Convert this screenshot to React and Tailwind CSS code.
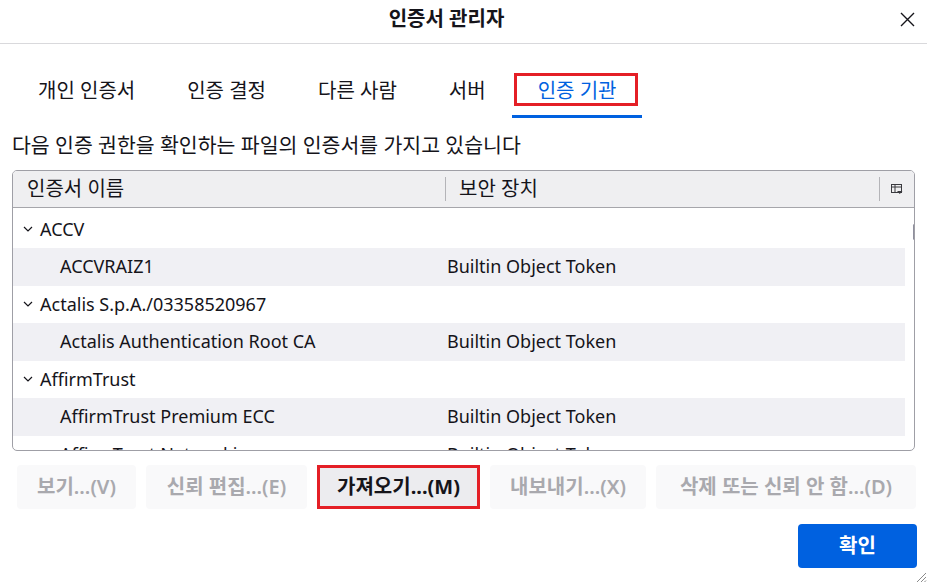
import React from "react";

const F = { fontFamily: '"Noto Sans", "Noto Sans CJK KR", sans-serif' };

function Chevron() {
  return (
    <svg width="10" height="6" viewBox="0 0 10 6" className="shrink-0">
      <path d="M1 1 L5 5 L9 1" fill="none" stroke="#15141a" strokeWidth="1.2" />
    </svg>
  );
}

const rows = [
  { type: "g", name: "ACCV" },
  { type: "c", name: "ACCVRAIZ1", dev: "Builtin Object Token" },
  { type: "g", name: "Actalis S.p.A./03358520967" },
  { type: "c", name: "Actalis Authentication Root CA", dev: "Builtin Object Token" },
  { type: "g", name: "AffirmTrust" },
  { type: "c", name: "AffirmTrust Premium ECC", dev: "Builtin Object Token" },
  { type: "c2", name: "AffirmTrust Networking", dev: "Builtin Object Token" },
];

export default function App() {
  return (
    <div
      className="w-[927px] h-[582px] bg-white text-[#15141a] flex flex-col relative overflow-hidden"
      style={F}
    >
      {/* title bar */}
      <div className="h-[44px] shrink-0 border-b border-[#d9d9dc] flex items-center justify-center pr-[34px] relative">
        <span className="text-[20px] leading-[26px] font-bold -mt-[5px]">인증서 관리자</span>
        <svg
          className="absolute right-[12px] top-[12px]"
          width="15"
          height="15"
          viewBox="0 0 15 15"
        >
          <path d="M1 1 L14 14 M14 1 L1 14" stroke="#15141a" strokeWidth="1.4" />
        </svg>
      </div>

      {/* tabs */}
      <div className="flex pl-[12px] mt-[26px] text-[20px]">
        {["개인 인증서", "인증 결정", "다른 사람", "서버"].map((t) => (
          <div key={t} className="h-[48px] px-[26px] flex items-center pb-[4px] border-b-[3px] border-transparent">
            {t}
          </div>
        ))}
        <div className="relative h-[48px] px-[26px] flex items-center pb-[4px] border-b-[3px] border-[#0061e0] text-[#0061e0]">
          인증 기관
          <div className="absolute left-[2px] right-[4px] top-[3px] h-[33px] border-[3px] border-[#e41f26]" />
        </div>
      </div>

      {/* description */}
      <div className="px-[12px] mt-[15px] text-[20.5px] leading-[24px]">
        다음 인증 권한을 확인하는 파일의 인증서를 가지고 있습니다
      </div>

      {/* table */}
      <div className="mx-[12px] mt-[13px] h-[281px] border border-[#9f9fa6] rounded-[5px] overflow-hidden flex flex-col">
        <div className="h-[37px] shrink-0 bg-[#efeff1] border-b border-[#a6a6ab] flex items-center text-[20px]">
          <div className="w-[433px] pl-[14px] h-[24px] flex items-center border-r border-[#b4b4b8]">
            인증서 이름
          </div>
          <div className="w-[434px] pl-[13px] h-[24px] flex items-center border-r border-[#b4b4b8]">
            보안 장치
          </div>
          <div className="flex-1 flex justify-center">
            <svg width="12" height="12" viewBox="0 0 12 12">
              <rect x="0.5" y="1.5" width="10" height="8" fill="none" stroke="#3a3a3f" strokeWidth="1" />
              <path d="M0.5 4 H10.5 M4 1.5 V9.5" stroke="#3a3a3f" strokeWidth="1" />
              <path d="M6 8 H11.5 L8.75 11 Z" fill="#3a3a3f" />
            </svg>
          </div>
        </div>
        <div className="flex-1 flex pt-[2.5px] relative overflow-hidden">
          <div className="w-[892px] flex flex-col text-[18px]">
            {rows.map((r, i) => (
              <div
                key={i}
                className={
                  "h-[37.5px] shrink-0 flex items-center " +
                  (r.type === "c" ? "bg-[#f0f0f4]" : "")
                }
              >
                {r.type === "g" ? (
                  <div className="flex items-center pl-[10px] gap-[7px]">
                    <Chevron />
                    <span>{r.name}</span>
                  </div>
                ) : (
                  <>
                    <div className="w-[434px] pl-[47px]">{r.name}</div>
                    <div>{r.dev}</div>
                  </>
                )}
              </div>
            ))}
          </div>
          <div className="flex-1 relative">
            <div className="absolute left-[8px] top-[13px] w-[3px] h-[16px] bg-[#8f8f9d] rounded-full" />
          </div>
        </div>
      </div>

      {/* buttons */}
      <div className="flex pl-[17px] gap-[10px] mt-[14px] text-[20px] font-semibold">
        <div className="w-[119px] h-[44px] rounded-[4px] bg-[#f9f9fa] text-[#a9a9ae] flex items-center justify-center">
          보기...(V)
        </div>
        <div className="w-[161px] h-[44px] rounded-[4px] bg-[#f9f9fa] text-[#a9a9ae] flex items-center justify-center">
          신뢰 편집...(E)
        </div>
        <div className="w-[163px] h-[44px] bg-[#ececef] border-[3px] border-[#e41f26] text-[#15141a] font-bold flex items-center justify-center">
          가져오기...(M)
        </div>
        <div className="w-[156px] h-[44px] rounded-[4px] bg-[#f9f9fa] text-[#a9a9ae] flex items-center justify-center">
          내보내기...(X)
        </div>
        <div className="w-[260px] h-[44px] rounded-[4px] bg-[#f9f9fa] text-[#a9a9ae] flex items-center justify-center">
          삭제 또는 신뢰 안 함...(D)
        </div>
      </div>

      <div className="flex justify-end pr-[10px] mt-[15px]">
        <div className="w-[119px] h-[44px] rounded-[4px] bg-[#0061e0] text-white text-[20px] font-bold flex items-center justify-center">
          확인
        </div>
      </div>

      {/* resize grip */}
      <svg className="absolute right-0 bottom-0" width="12" height="11" viewBox="0 0 12 11">
        <path d="M11 2 L2 11 M11 6 L6 11 M11 9.5 L9.5 11" stroke="#8a8a8a" strokeWidth="1" />
      </svg>
    </div>
  );
}
